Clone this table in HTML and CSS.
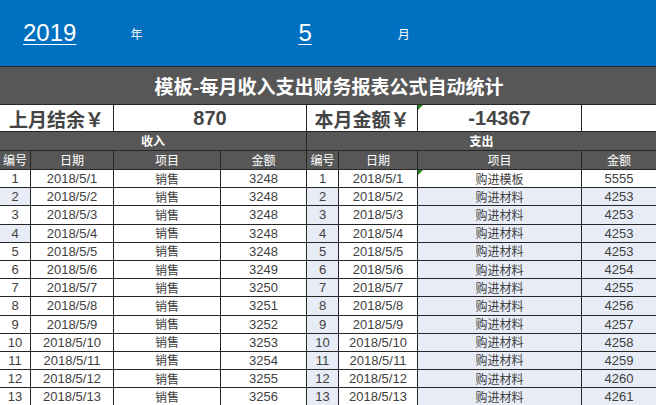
FILE: index.html
```html
<!DOCTYPE html>
<html lang="zh">
<head>
<meta charset="utf-8">
<title>模板-每月收入支出财务报表公式自动统计</title>
<link rel="stylesheet" href="styles.css">
</head>
<body>
<div class="top">
  <span class="year">2019</span>
  <span class="unit u-year">年</span>
  <span class="month">5</span>
  <span class="unit u-month">月</span>
</div>
<div class="sheet">
  <div class="title">模板-每月收入支出财务报表公式自动统计</div>

  <div class="bal label s2">上月结余￥</div>
  <div class="bal val s2">870</div>
  <div class="bal label s2">本月金额￥</div>
  <div class="bal val mark">-14367</div>
  <div class="bal"></div>

  <div class="sec s4">收入</div>
  <div class="sec s4">支出</div>

  <div class="hd">编号</div><div class="hd">日期</div><div class="hd">项目</div><div class="hd">金额</div>
  <div class="hd">编号</div><div class="hd">日期</div><div class="hd">项目</div><div class="hd">金额</div>

  <div class="c">1</div><div class="c">2018/5/1</div><div class="c k">销售</div><div class="c">3248</div>
  <div class="c">1</div><div class="c">2018/5/1</div><div class="c k mark">购进模板</div><div class="c">5555</div>

  <div class="c t">2</div><div class="c">2018/5/2</div><div class="c k">销售</div><div class="c">3248</div>
  <div class="c t">2</div><div class="c">2018/5/2</div><div class="c k t">购进材料</div><div class="c t">4253</div>

  <div class="c">3</div><div class="c">2018/5/3</div><div class="c k">销售</div><div class="c">3248</div>
  <div class="c t">3</div><div class="c">2018/5/3</div><div class="c k t">购进材料</div><div class="c t">4253</div>

  <div class="c t">4</div><div class="c">2018/5/4</div><div class="c k">销售</div><div class="c">3248</div>
  <div class="c t">4</div><div class="c">2018/5/4</div><div class="c k t">购进材料</div><div class="c t">4253</div>

  <div class="c">5</div><div class="c">2018/5/5</div><div class="c k">销售</div><div class="c">3248</div>
  <div class="c t">5</div><div class="c">2018/5/5</div><div class="c k t">购进材料</div><div class="c t">4253</div>

  <div class="c">6</div><div class="c">2018/5/6</div><div class="c k">销售</div><div class="c">3249</div>
  <div class="c t">6</div><div class="c">2018/5/6</div><div class="c k t">购进材料</div><div class="c t">4254</div>

  <div class="c">7</div><div class="c">2018/5/7</div><div class="c k">销售</div><div class="c">3250</div>
  <div class="c t">7</div><div class="c">2018/5/7</div><div class="c k t">购进材料</div><div class="c t">4255</div>

  <div class="c">8</div><div class="c">2018/5/8</div><div class="c k">销售</div><div class="c">3251</div>
  <div class="c t">8</div><div class="c">2018/5/8</div><div class="c k t">购进材料</div><div class="c t">4256</div>

  <div class="c">9</div><div class="c">2018/5/9</div><div class="c k">销售</div><div class="c">3252</div>
  <div class="c t">9</div><div class="c">2018/5/9</div><div class="c k t">购进材料</div><div class="c t">4257</div>

  <div class="c">10</div><div class="c">2018/5/10</div><div class="c k">销售</div><div class="c">3253</div>
  <div class="c t">10</div><div class="c">2018/5/10</div><div class="c k t">购进材料</div><div class="c t">4258</div>

  <div class="c">11</div><div class="c">2018/5/11</div><div class="c k">销售</div><div class="c">3254</div>
  <div class="c t">11</div><div class="c">2018/5/11</div><div class="c k t">购进材料</div><div class="c t">4259</div>

  <div class="c">12</div><div class="c">2018/5/12</div><div class="c k">销售</div><div class="c">3255</div>
  <div class="c t">12</div><div class="c">2018/5/12</div><div class="c k t">购进材料</div><div class="c t">4260</div>

  <div class="c">13</div><div class="c">2018/5/13</div><div class="c k">销售</div><div class="c">3256</div>
  <div class="c t">13</div><div class="c">2018/5/13</div><div class="c k t">购进材料</div><div class="c t">4261</div>
</div>
</body>
</html>
```
FILE: styles.css
```css
html, body {
  margin: 0;
  padding: 0;
  overflow: hidden;
  background: #ffffff;
}
body {
  width: 656px;
  height: 405px;
  font-family: "Liberation Sans", "Noto Sans CJK SC", sans-serif;
}
.top {
  height: 66px;
  background: #0070c0;
  color: #ffffff;
  display: flex;
  align-items: center;
  padding-left: 23px;
  box-sizing: border-box;
}
.year, .month {
  font-size: 24px;
  text-decoration: underline;
  text-decoration-thickness: 1px;
  text-underline-offset: 3px;
  line-height: 1;
}
.unit {
  font-family: "Noto Sans CJK SC", sans-serif;
  font-size: 12px;
}
.u-year { margin-left: 54px; }
.month { margin-left: 156px; }
.u-month { margin-left: 86px; }

.sheet {
  display: grid;
  grid-template-columns: 30px 82px 106px 85px 31px 78px 163px 74px;
  grid-template-rows: 37px 26px 18px 18px repeat(13, 17.2px);
  gap: 1px;
  background: #262626;
  border-top: 1px solid #262626;
}
.sheet > div {
  display: flex;
  align-items: center;
  justify-content: center;
  white-space: nowrap;
  overflow: hidden;
  position: relative;
  line-height: 1;
}
.title {
  grid-column: 1 / -1;
  background: #575757;
  color: #ffffff;
  font-family: "Noto Sans CJK SC", sans-serif;
  font-weight: bold;
  font-size: 19px;
  padding-left: 2px;
}
.s2 { grid-column: span 2; }
.s4 { grid-column: span 4; }
.bal {
  background: #ffffff;
  color: #444444;
  font-weight: bold;
}
.bal.label {
  font-family: "Noto Sans CJK SC", sans-serif;
  font-size: 19px;
}
.bal.val {
  font-size: 20px;
}
.sec {
  background: #575757;
  color: #ffffff;
  font-family: "Noto Sans CJK SC", sans-serif;
  font-weight: bold;
  font-size: 12px;
}
.hd {
  background: #575757;
  color: #ffffff;
  font-family: "Noto Sans CJK SC", sans-serif;
  font-size: 12px;
}
.c {
  background: #ffffff;
  color: #404040;
  font-size: 13px;
}
.c.k {
  font-family: "Noto Sans CJK SC", sans-serif;
  font-size: 12px;
}
.c.t {
  background: #e8ecf6;
}
.mark::before {
  content: "";
  position: absolute;
  left: 0;
  top: 0;
  border-top: 5px solid #1e8a1e;
  border-right: 5px solid transparent;
}
```
